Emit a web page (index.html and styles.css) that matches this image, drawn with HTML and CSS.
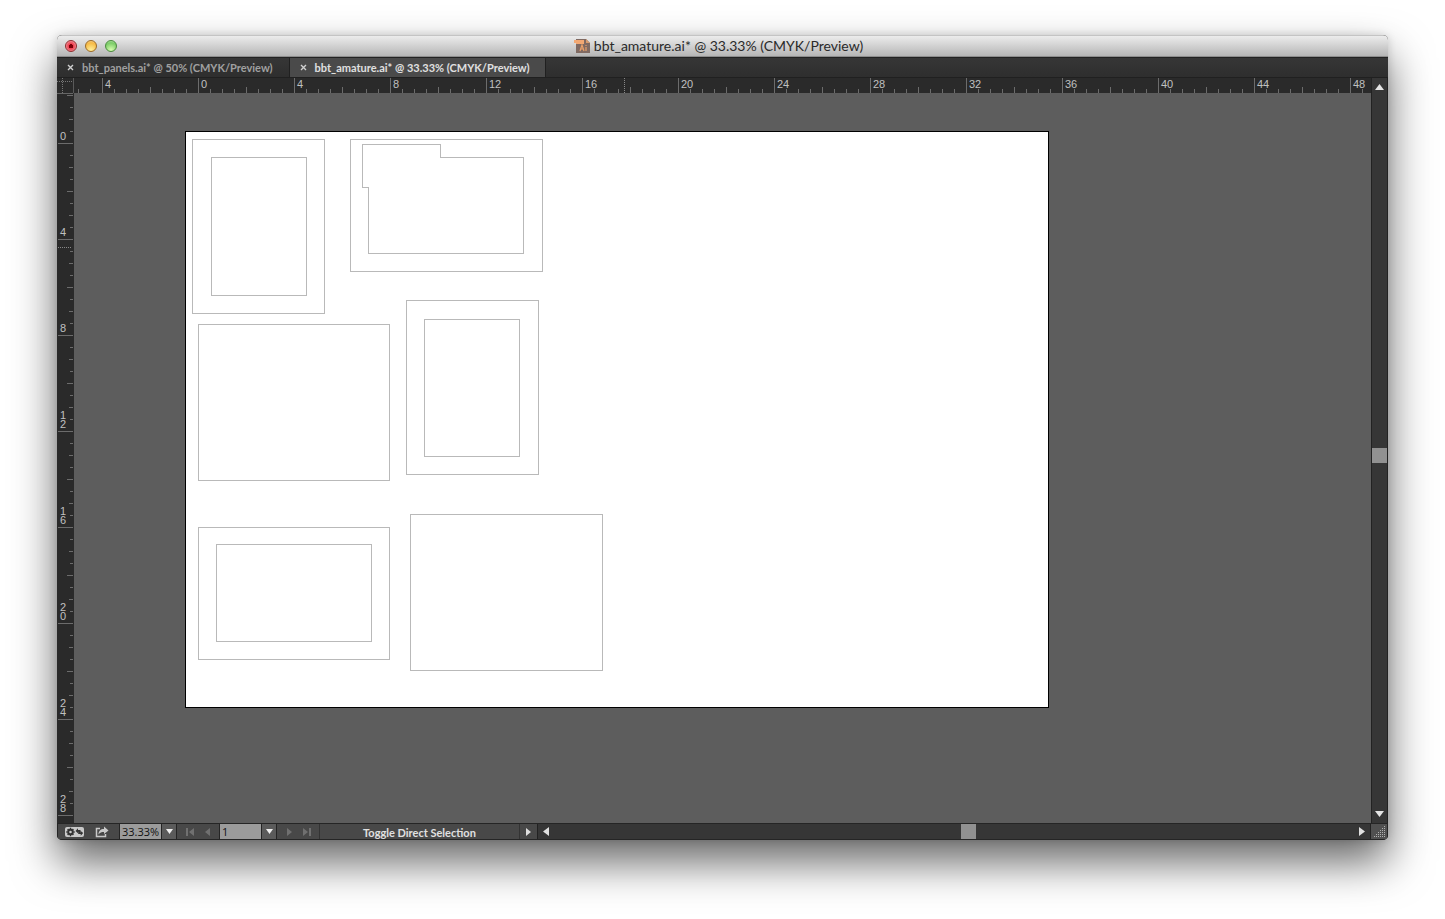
FILE: index.html
```
<!DOCTYPE html>
<html lang="en">
<head>
<meta charset="utf-8">
<title>bbt_amature.ai</title>
<link rel="stylesheet" href="styles.css">
</head>
<body>
<main class="window">
  <header class="titlebar">
    <div class="lights">
      <button class="light close" aria-label="Close"></button>
      <button class="light minimize" aria-label="Minimize"></button>
      <button class="light expand" aria-label="Zoom"></button>
    </div>
    <svg class="doc-icon" viewBox="0 0 16 16" aria-hidden="true">
      <path d="M2 1h10l4 4v10H2z" fill="#806a62"/>
      <path d="M12 1l4 4h-4z" fill="#d79a6d"/>
      <path d="M0 2h10v4H2V5H0z" fill="#f2a873"/>
      <path d="M6 13l2-6 2 6M7 11h2M12 9v4M12 7v1" fill="none" stroke="#e8a06a" stroke-width="1.2"/>
    </svg>
    <h1 class="title">bbt_amature.ai* @ 33.33% (CMYK/Preview)</h1>
  </header>

  <nav class="tabs">
    <div class="tab">
      <button class="tab-close" aria-label="Close bbt_panels.ai"><svg viewBox="0 0 7 7"><path d="M1 1l5 5M6 1l-5 5"/></svg></button>
      <button class="tab-name">bbt_panels.ai* @ 50% (CMYK/Preview)</button>
    </div>
    <div class="tab active">
      <button class="tab-close" aria-label="Close bbt_amature.ai"><svg viewBox="0 0 7 7"><path d="M1 1l5 5M6 1l-5 5"/></svg></button>
      <button class="tab-name">bbt_amature.ai* @ 33.33% (CMYK/Preview)</button>
    </div>
  </nav>

  <section class="workspace">
    <div class="corner"></div>
    <div class="ruler-x">
      <span>4</span><span>0</span><span>4</span><span>8</span><span>12</span><span>16</span><span>20</span><span>24</span><span>28</span><span>32</span><span>36</span><span>40</span><span>44</span><span>48</span>
      <i class="marker-x"></i>
    </div>
    <div class="ruler-y">
      <span>0</span><span>4</span><span>8</span><span>1<br>2</span><span>1<br>6</span><span>2<br>0</span><span>2<br>4</span><span>2<br>8</span>
      <i class="marker-y"></i>
    </div>
    <div class="canvas">
      <svg class="artboard" width="864" height="577" viewBox="0 0 864 577" shape-rendering="crispEdges">
        <rect x=".5" y=".5" width="863" height="576" fill="#fff" stroke="#000"/>
        <g fill="none" stroke="#b9b9b9">
          <rect x="7.5" y="8.5" width="132" height="174"/>
          <rect x="26.5" y="26.5" width="95" height="138"/>
          <rect x="165.5" y="8.5" width="192" height="132"/>
          <path d="M177.5 13.5H255.5V26.5H338.5V122.5H183.5V56.5H177.5Z"/>
          <rect x="221.5" y="169.5" width="132" height="174"/>
          <rect x="239.5" y="188.5" width="95" height="137"/>
          <rect x="13.5" y="193.5" width="191" height="156"/>
          <rect x="13.5" y="396.5" width="191" height="132"/>
          <rect x="31.5" y="413.5" width="155" height="97"/>
          <rect x="225.5" y="383.5" width="192" height="156"/>
        </g>
      </svg>
    </div>
    <div class="scroll-y">
      <button aria-label="Scroll up"><svg viewBox="0 0 9 6"><path d="M0 6L4.5 0 9 6z"/></svg></button>
      <div class="track-y"><i class="thumb-y"></i></div>
      <button aria-label="Scroll down"><svg viewBox="0 0 9 6"><path d="M0 0h9L4.5 6z"/></svg></button>
    </div>
  </section>

  <footer class="statusbar">
    <button class="tool sync" aria-label="Sync settings">
      <svg width="19" height="10" viewBox="0 0 19 10">
        <rect width="19" height="10" rx="2" fill="#c9c9c9"/>
        <circle cx="5.5" cy="5" r="2.3" fill="none" stroke="#333" stroke-width="2"/>
        <path d="M5.500 .8v1.200M5.500 8v1.200M1.300 5h1.200M8.500 5h1.200M2.600 2.100l.9.900M7.500 7l.9.900M8.400 2.100l-.9.900M3.500 7l-.9.900" stroke="#333" stroke-width="1.5"/>
        <path d="M10.500 4L13 1.200V3h2.500v3h-1.300V4.800H13v1.500zM18.200 6l-2.500 2.800V7h-2.500V4.500h1.300v1.200h1.200V4z" fill="#333"/>
      </svg>
    </button>
    <button class="tool share" aria-label="Share">
      <svg width="14" height="12" viewBox="0 0 14 12">
        <path d="M5 2.500H1.500v8h9V8" fill="none" stroke="#c9c9c9" stroke-width="1.5"/>
        <path d="M3.500 8.500C3.500 5 5.500 3 9 3V.5l4.500 4L9 8V6C6.500 6 5 6.500 3.500 8.500z" fill="#c9c9c9"/>
      </svg>
    </button>
    <div class="combo zoom">
      <input value="33.33%" aria-label="Zoom level">
      <button aria-label="Zoom presets"><svg viewBox="0 0 7 5"><path d="M0 0h7L3.5 5z"/></svg></button>
    </div>
    <button class="step" aria-label="First artboard" disabled><svg width="8" height="8" viewBox="0 0 8 8"><path d="M0 0h2v8H0zM8 0v8L3 4z"/></svg></button>
    <button class="step" aria-label="Previous artboard" disabled><svg width="8" height="8" viewBox="0 0 8 8"><path d="M7 0v8L2 4z"/></svg></button>
    <div class="combo page">
      <input value="1" aria-label="Artboard">
      <button aria-label="Choose artboard"><svg viewBox="0 0 7 5"><path d="M0 0h7L3.5 5z"/></svg></button>
    </div>
    <button class="step" aria-label="Next artboard" disabled><svg width="8" height="8" viewBox="0 0 8 8"><path d="M1 0v8l5-4z"/></svg></button>
    <button class="step" aria-label="Last artboard" disabled><svg width="8" height="8" viewBox="0 0 8 8"><path d="M0 0v8l5-4zM6 0h2v8H6z"/></svg></button>
    <div class="status">Toggle Direct Selection</div>
    <button class="status-menu" aria-label="Status options"><svg width="6" height="8" viewBox="0 0 6 8"><path d="M0 0v8l5-4z"/></svg></button>
    <div class="scroll-x">
      <button aria-label="Scroll left"><svg width="6" height="9" viewBox="0 0 6 9"><path d="M6 0v9L0 4.5z"/></svg></button>
      <div class="track-x"><i class="thumb-x"></i></div>
      <button aria-label="Scroll right"><svg width="6" height="9" viewBox="0 0 6 9"><path d="M0 0v9l6-4.5z"/></svg></button>
    </div>
    <div class="grip">
      <svg width="11" height="11" viewBox="0 0 11 11" shape-rendering="crispEdges">
        <path d="M10 0h1v1h-1zM8 2h1v1H8zM10 2h1v1h-1zM6 4h1v1H6zM8 4h1v1H8zM10 4h1v1h-1zM4 6h1v1H4zM6 6h1v1H6zM8 6h1v1H8zM10 6h1v1h-1zM2 8h1v1H2zM4 8h1v1H4zM6 8h1v1H6zM8 8h1v1H8zM10 8h1v1h-1zM0 10h1v1H0zM2 10h1v1H2zM4 10h1v1H4zM6 10h1v1H6zM8 10h1v1H8zM10 10h1v1h-1z"/>
      </svg>
    </div>
  </footer>
</main>
</body>
</html>
```
FILE: styles.css
```
* { box-sizing: border-box; }

body {
  margin: 0;
  min-height: 100vh;
  padding: 35px 57px 79px;
  display: flex;
  background: #fff;
  font-family: Lato, "Open Sans", sans-serif;
  overflow: hidden;
}

button {
  margin: 0;
  padding: 0;
  border: 0;
  background: none;
  font: inherit;
  color: inherit;
  display: flex;
  align-items: center;
  justify-content: center;
}

svg { display: block; }

.window {
  flex: 1;
  min-width: 0;
  display: flex;
  flex-direction: column;
  border-radius: 5px;
  overflow: hidden;
  background: #2a2a2a;
  box-shadow: 0 22px 44px rgba(0, 0, 0, .6), 0 0 8px rgba(0, 0, 0, .15);
}

/* Title bar */
.titlebar {
  position: relative;
  height: 22px;
  display: flex;
  align-items: center;
  justify-content: center;
  gap: 4px;
  padding-right: 8px;
  border-top: 1px solid #c4c4c4;
  border-bottom: 1px solid #8d8d8d;
  background: linear-gradient(#ececec, #b6b6b6);
}
.lights {
  position: absolute;
  left: 8px;
  display: flex;
  gap: 8px;
}
.light {
  width: 12px;
  height: 12px;
  border-radius: 50%;
  border: 1px solid;
}
.close { border-color: #8f2a2c; background: radial-gradient(circle at 50% 52%, #7d0008 0 2px, #f2384a 2px, #ee6570 4px, #ffb4b8 6px); }
.minimize { border-color: #9c6a25; background: radial-gradient(circle at 50% 90%, #fff09a, #f6b944 70%, #f8dcae); }
.expand { border-color: #4a8a3c; background: radial-gradient(circle at 50% 90%, #d8ffb0, #7acb66 70%, #c8efbe); }
.doc-icon { width: 16px; height: 16px; }
.title {
  margin: 0;
  font-size: 14px;
  line-height: 20px;
  font-weight: 400;
  color: #2a2a2a;
  white-space: nowrap;
}

/* Document tabs */
.tabs {
  height: 21px;
  display: flex;
  border-top: 1px solid #222;
  border-bottom: 1px solid #202020;
  background: linear-gradient(#363636, #2e2e2e);
}
.tab {
  display: flex;
  align-items: center;
  gap: 8px;
  padding: 0 16px 0 10px;
  border-right: 1px solid #202020;
  color: #a0a0a0;
  font-size: 11px;
  line-height: 19px;
  font-weight: 700;
  white-space: nowrap;
}
.tab.active { background: #4a4a4a; color: #e0e0e0; }
.tab-close { width: 7px; height: 7px; }
.tab-close svg { width: 7px; height: 7px; fill: none; stroke: #d0d0d0; stroke-width: 1.4; }

/* Workspace with rulers */
.workspace {
  flex: 1;
  min-height: 0;
  display: grid;
  grid-template-columns: 17px minmax(0, 1fr) 17px;
  grid-template-rows: 15px minmax(0, 1fr);
  color: #c0c0c0;
  font-family: "Liberation Sans", sans-serif;
  font-size: 11px;
}
.corner {
  border-right: 1px solid #5a5a5a;
  background:
    repeating-linear-gradient(90deg, #777 0 1px, transparent 1px 2px) 0 3px / 100% 1px no-repeat,
    repeating-linear-gradient(#777 0 1px, transparent 1px 2px) 5px 0 / 1px 100% no-repeat,
    #2a2a2a;
}
.ruler-x {
  position: relative;
  display: flex;
  padding-left: 28px;
  overflow: hidden;
  line-height: 13px;
  background:
    repeating-linear-gradient(90deg, transparent 0 28px, #6c6c6c 28px 29px, transparent 29px 48px) 0 100% / 100% 6px no-repeat,
    repeating-linear-gradient(90deg, transparent 0 4px, #6c6c6c 4px 5px, transparent 5px 12px) 0 100% / 100% 4px no-repeat,
    #2a2a2a;
}
.ruler-x span {
  flex: 0 0 96px;
  border-left: 1px solid #6c6c6c;
  padding-left: 2px;
}
.ruler-y {
  position: relative;
  display: flex;
  flex-direction: column;
  margin-right: 1px;
  padding-left: 1px;
  overflow: hidden;
  line-height: 9px;
  border-top: 1px solid #666;
  background:
    repeating-linear-gradient(transparent 0 1px, #6c6c6c 1px 2px, transparent 2px 48px) 100% 0 / 6px 100% no-repeat,
    repeating-linear-gradient(transparent 0 1px, #6c6c6c 1px 2px, transparent 2px 24px) 100% 0 / 4px 100% no-repeat,
    repeating-linear-gradient(transparent 0 1px, #6c6c6c 1px 2px, transparent 2px 12px) 100% 0 / 3px 100% no-repeat,
    #2a2a2a;
}
.ruler-y span {
  flex: 0 0 96px;
  display: flex;
  align-items: flex-end;
  padding: 0 0 2px 2px;
  border-bottom: 1px solid #6c6c6c;
}
.ruler-y span:first-child { flex-basis: 50px; }
.marker-x {
  position: absolute;
  left: 550px;
  top: 0;
  width: 1px;
  height: 100%;
  background: repeating-linear-gradient(#888 0 1px, transparent 1px 2px);
}
.marker-y {
  position: absolute;
  left: 1px;
  top: 153px;
  width: 13px;
  height: 1px;
  background: repeating-linear-gradient(90deg, #888 0 1px, transparent 1px 2px);
}
.canvas {
  background: #5d5d5d;
  overflow: hidden;
  padding: 38px 0 0 111px;
}

/* Scroll bars */
.scroll-y {
  grid-column: 3;
  grid-row: 1 / 3;
  display: flex;
  flex-direction: column;
  border: solid #222;
  border-width: 0 1px;
  background: #363636;
}
.scroll-y button { height: 18px; }
.scroll-y svg { width: 9px; height: 6px; fill: #e4e4e4; }
.track-y { flex: 1; display: flex; flex-direction: column; }
.track-y::before { content: ""; flex: 352; }
.track-y::after { content: ""; flex: 342; }
.thumb-y { height: 15px; background: #919191; }

/* Status bar */
.statusbar {
  height: 17px;
  display: flex;
  align-items: stretch;
  border: solid #252525;
  border-width: 1px 0 1px 1px;
  background: #484848;
  font-size: 11px;
  line-height: 17px;
}
.sync { margin-left: 7px; width: 19px; }
.share { margin-left: 10px; width: 15px; }
.combo {
  display: flex;
  width: 58px;
  border: solid #252525;
  border-width: 0 1px;
}
.combo.zoom { margin: 0 4px 0 10px; }
.combo.page { margin: 0 4px; }
.combo input {
  flex: 1;
  min-width: 0;
  margin: 0;
  padding: 1px 2px 0;
  border: 0;
  border-right: 1px solid #252525;
  border-radius: 0;
  background: #9b9b9b;
  color: #111;
  font: 11px/14px "Open Sans", "Noto Sans", sans-serif;
}
.combo button { width: 14px; background: #5b5b5b; }
.combo svg { width: 7px; height: 5px; fill: #eee; }
.step { width: 17px; }
.step svg { fill: #707070; }
.status {
  width: 201px;
  margin-left: 4px;
  border: solid #333;
  border-width: 0 1px;
  color: #e0e0e0;
  font-weight: 700;
  text-align: center;
  white-space: nowrap;
}
.status-menu { width: 17px; }
.status-menu svg, .scroll-x svg { fill: #e0e0e0; }
.scroll-x {
  flex: 1;
  display: flex;
  border: solid #222;
  border-width: 0 1px;
  background: #363636;
}
.scroll-x button { width: 16px; }
.track-x { flex: 1; display: flex; }
.track-x::before { content: ""; flex: 407; }
.track-x::after { content: ""; flex: 378; }
.thumb-x { width: 15px; background: #919191; }
.grip {
  width: 17px;
  display: flex;
  align-items: center;
  justify-content: center;
  border-right: 1px solid #252525;
  background: #505050;
}
.grip svg { fill: #b0b0b0; }
```
